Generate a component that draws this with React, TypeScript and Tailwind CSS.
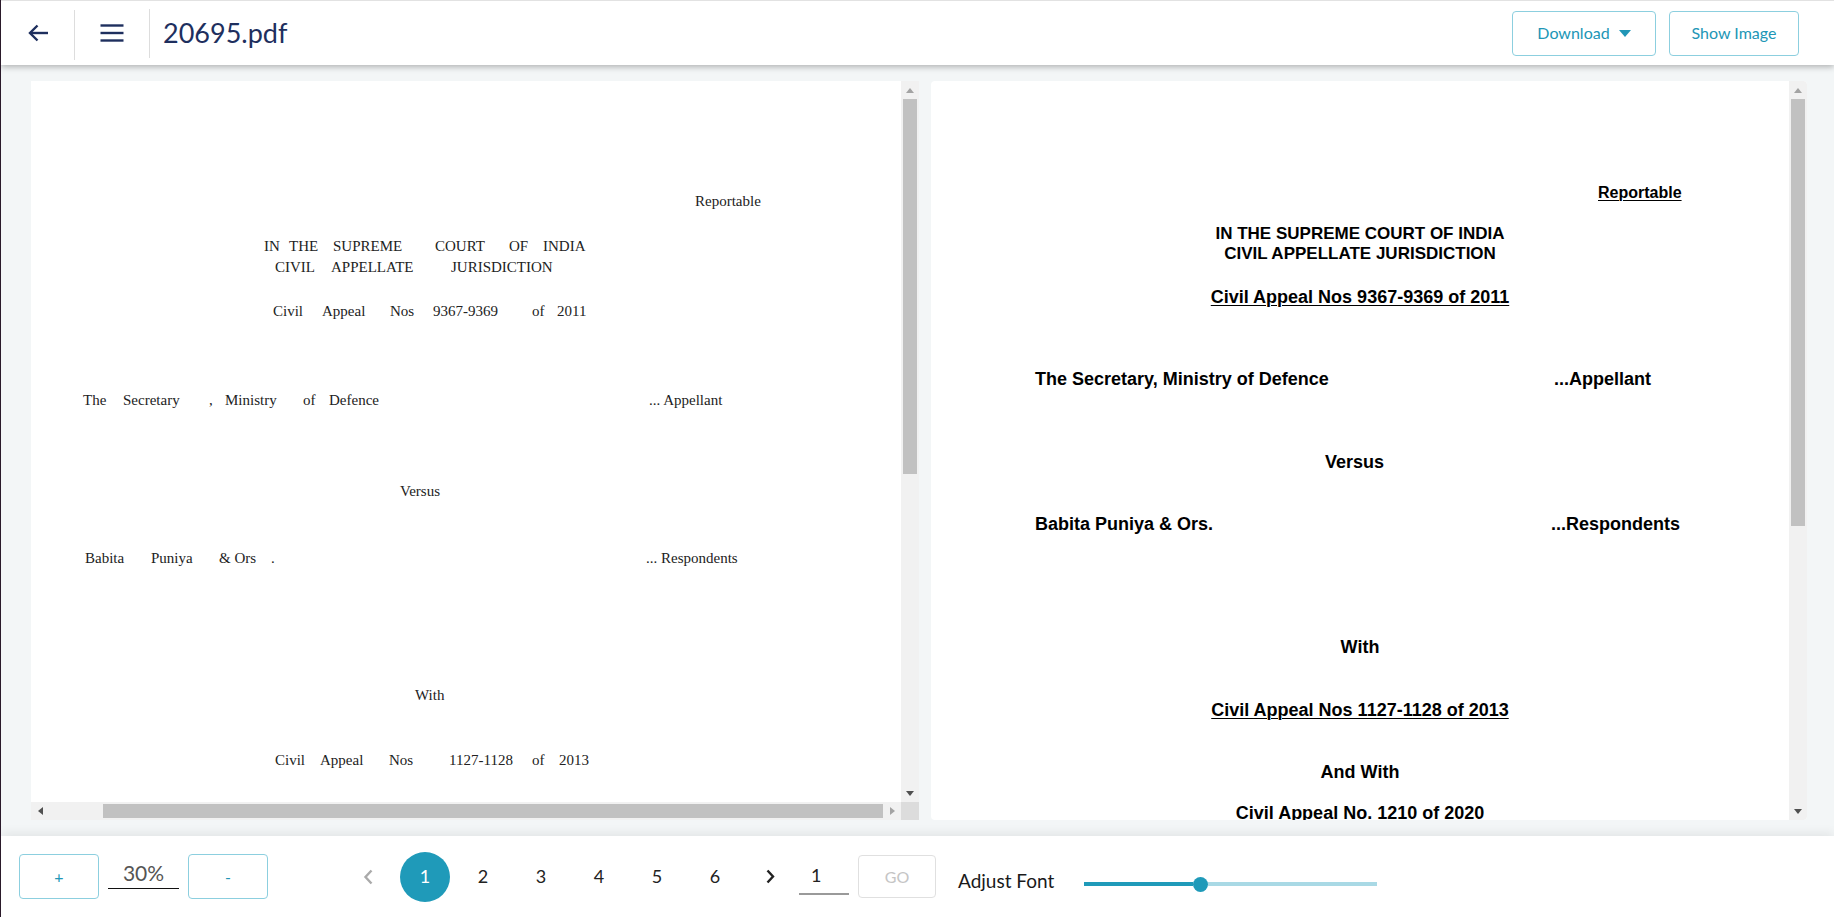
import React from "react";

function UpTri({ c }: { c: string }) {
  return (
    <svg width="8" height="5" viewBox="0 0 8 5">
      <polygon points="0,5 4,0 8,5" fill={c} />
    </svg>
  );
}
function DownTri({ c }: { c: string }) {
  return (
    <svg width="8" height="5" viewBox="0 0 8 5">
      <polygon points="0,0 8,0 4,5" fill={c} />
    </svg>
  );
}
function LeftTri({ c }: { c: string }) {
  return (
    <svg width="5" height="8" viewBox="0 0 5 8">
      <polygon points="5,0 5,8 0,4" fill={c} />
    </svg>
  );
}
function RightTri({ c }: { c: string }) {
  return (
    <svg width="5" height="8" viewBox="0 0 5 8">
      <polygon points="0,0 5,4 0,8" fill={c} />
    </svg>
  );
}

function VScroll({ thumb }: { thumb: "l" | "r" }) {
  return (
    <div className="w-[18px] shrink-0 bg-[#f1f1f1] flex flex-col">
      <div className="h-[18px] flex items-center justify-center">
        <UpTri c="#a3a3a3" />
      </div>
      {thumb === "l" ? (
        <div className="mx-[2px] h-[375px] bg-[#c1c1c1]" />
      ) : (
        <div className="mx-[2px] h-[427px] bg-[#c1c1c1]" />
      )}
      <div className="flex-1" />
      <div className="h-[18px] flex items-center justify-center">
        <DownTri c="#505050" />
      </div>
    </div>
  );
}

export default function App() {
  return (
    <div className="h-screen w-full flex flex-col overflow-hidden border-l border-[#2a1a2a] bg-white font-['Lato','Open_Sans',sans-serif]">
      {/* Header */}
      <header className="relative z-10 h-[65px] shrink-0 bg-white border-t border-[#e2e2e2] shadow-[0_2px_6px_rgba(0,0,0,0.28)] flex items-center">
        <div className="w-[73px] h-full flex items-center justify-center">
          <svg width="22" height="20" viewBox="0 0 22 20" fill="none" stroke="#1e2f5e" strokeWidth="2.4" strokeLinecap="butt">
            <path d="M21 10H3" />
            <path d="M10.5 2.5L3 10l7.5 7.5" />
          </svg>
        </div>
        <div className="w-px h-[50px] bg-[#dddddd] mt-[4px]" />
        <div className="w-[74px] h-full flex items-center justify-center">
          <svg width="24" height="18" viewBox="0 0 24 18" fill="none" stroke="#1e2f5e" strokeWidth="2.4">
            <path d="M0.5 1.5H23.5" />
            <path d="M0.5 9H23.5" />
            <path d="M0.5 16.5H23.5" />
          </svg>
        </div>
        <div className="w-px h-[49px] bg-[#dddddd]" />
        <div className="ml-[13px] text-[27px] leading-none text-[#1e2f5e] pb-[2px]">20695.pdf</div>
        <div className="ml-auto mr-[35px] flex gap-[13px]">
          <button className="w-[144px] h-[45px] border border-[#8ccfdf] rounded-[4px] text-[#2196b6] text-[16px] flex items-center justify-center gap-[9px]">
            <span>Download</span>
            <svg width="12" height="7" viewBox="0 0 12 7">
              <polygon points="0,0 12,0 6,7" fill="#2196b6" />
            </svg>
          </button>
          <button className="w-[130px] h-[45px] border border-[#8ccfdf] rounded-[4px] text-[#2196b6] text-[16px] flex items-center justify-center">
            Show Image
          </button>
        </div>
      </header>

      {/* Main */}
      <main className="flex-1 min-h-0 bg-[#f3f6f7] flex pt-[16px] pb-[16px] pl-[30px] gap-[12px]">
        {/* Left pane */}
        <div className="w-[888px] shrink-0 bg-white flex flex-col">
          <div className="flex-1 min-h-0 flex">
            <div className="flex-1 overflow-hidden font-['Liberation_Serif','Times_New_Roman',serif] text-[15px] leading-[20px] text-[#222] whitespace-nowrap">
              <div className="mt-[110px] pl-[664px]">Reportable</div>
              <div className="mt-[25px] pl-[233px] flex">
                <span className="w-[25px]">IN</span>
                <span className="w-[44px]">THE</span>
                <span className="w-[102px]">SUPREME</span>
                <span className="w-[74px]">COURT</span>
                <span className="w-[34px]">OF</span>
                <span>INDIA</span>
              </div>
              <div className="mt-[1px] pl-[244px] flex">
                <span className="w-[56px]">CIVIL</span>
                <span className="w-[120px]">APPELLATE</span>
                <span>JURISDICTION</span>
              </div>
              <div className="mt-[24px] pl-[242px] flex">
                <span className="w-[49px]">Civil</span>
                <span className="w-[68px]">Appeal</span>
                <span className="w-[43px]">Nos</span>
                <span className="w-[99px]">9367-9369</span>
                <span className="w-[25px]">of</span>
                <span>2011</span>
              </div>
              <div className="mt-[69px] pl-[52px] flex">
                <span className="w-[40px]">The</span>
                <span className="w-[86px]">Secretary</span>
                <span className="w-[16px]">,</span>
                <span className="w-[78px]">Ministry</span>
                <span className="w-[26px]">of</span>
                <span className="w-[320px]">Defence</span>
                <span>... Appellant</span>
              </div>
              <div className="mt-[71px] pl-[369px]">Versus</div>
              <div className="mt-[47px] pl-[54px] flex">
                <span className="w-[66px]">Babita</span>
                <span className="w-[68px]">Puniya</span>
                <span className="w-[52px]">&amp; Ors</span>
                <span className="w-[375px]">.</span>
                <span>... Respondents</span>
              </div>
              <div className="mt-[117px] pl-[384px]">With</div>
              <div className="mt-[45px] pl-[244px] flex">
                <span className="w-[45px]">Civil</span>
                <span className="w-[69px]">Appeal</span>
                <span className="w-[60px]">Nos</span>
                <span className="w-[83px]">1127-1128</span>
                <span className="w-[27px]">of</span>
                <span>2013</span>
              </div>
            </div>
            <VScroll thumb="l" />
          </div>
          <div className="h-[18px] shrink-0 flex">
            <div className="flex-1 bg-[#f1f1f1] flex">
              <div className="w-[18px] flex items-center justify-center">
                <LeftTri c="#505050" />
              </div>
              <div className="w-[54px]" />
              <div className="w-[780px] my-[2px] bg-[#c1c1c1]" />
              <div className="w-[18px] flex items-center justify-center">
                <RightTri c="#a3a3a3" />
              </div>
            </div>
            <div className="w-[18px] bg-[#dcdcdc]" />
          </div>
        </div>

        {/* Right pane */}
        <div className="w-[876px] shrink-0 bg-white rounded-[4px] flex overflow-hidden">
          <div className="flex-1 overflow-hidden font-['Liberation_Sans',Arial,sans-serif] font-bold text-black leading-[20px] whitespace-nowrap">
            <div className="mt-[102px] pl-[667px] text-[16px] underline decoration-1 underline-offset-2">Reportable</div>
            <div className="mt-[21px] text-center text-[17px]">IN THE SUPREME COURT OF INDIA</div>
            <div className="text-center text-[17px]">CIVIL APPELLATE JURISDICTION</div>
            <div className="mt-[23px] text-center text-[18px] underline decoration-1 underline-offset-2">Civil Appeal Nos 9367-9369 of 2011</div>
            <div className="mt-[62px] pl-[104px] flex text-[18px]">
              <span className="w-[519px]">The Secretary, Ministry of Defence</span>
              <span>...Appellant</span>
            </div>
            <div className="mt-[63px] text-center text-[18px] pr-[11px]">Versus</div>
            <div className="mt-[42px] pl-[104px] flex text-[18px]">
              <span className="w-[516px]">Babita Puniya &amp; Ors.</span>
              <span>...Respondents</span>
            </div>
            <div className="mt-[103px] text-center text-[18px]">With</div>
            <div className="mt-[43px] text-center text-[18px] underline decoration-1 underline-offset-2">Civil Appeal Nos 1127-1128 of 2013</div>
            <div className="mt-[42px] text-center text-[18px]">And With</div>
            <div className="mt-[21px] text-center text-[18px]">Civil Appeal No. 1210 of 2020</div>
          </div>
          <VScroll thumb="r" />
        </div>
      </main>

      {/* Footer */}
      <footer className="relative z-10 h-[81px] shrink-0 bg-white shadow-[0_-3px_10px_rgba(0,0,0,0.07)] flex items-center">
        <button className="ml-[18px] w-[80px] h-[45px] border border-[#8ccfdf] rounded-[4px] text-[#2196b6] text-[16px]">+</button>
        <div className="ml-[9px] w-[71px] h-[34px] self-start mt-[19px] border-b border-[#111] flex items-center justify-center pt-[2px] text-[21px] text-[#555]">30%</div>
        <button className="ml-[9px] w-[80px] h-[45px] border border-[#8ccfdf] rounded-[4px] text-[#2196b6] text-[16px]">-</button>

        <div className="ml-[75px] w-[50px] flex items-center justify-center">
          <svg width="10" height="16" viewBox="0 0 10 16" fill="none" stroke="#aaaaaa" strokeWidth="2.4">
            <path d="M8.5 1.5L2.5 8l6 6.5" />
          </svg>
        </div>
        <div className="ml-[7px] flex gap-[8px] text-[18px] text-[#222]">
          <div className="w-[50px] h-[50px] rounded-full bg-[#1f9ab9] text-white flex items-center justify-center">1</div>
          <div className="w-[50px] h-[50px] flex items-center justify-center">2</div>
          <div className="w-[50px] h-[50px] flex items-center justify-center">3</div>
          <div className="w-[50px] h-[50px] flex items-center justify-center">4</div>
          <div className="w-[50px] h-[50px] flex items-center justify-center">5</div>
          <div className="w-[50px] h-[50px] flex items-center justify-center">6</div>
        </div>
        <div className="ml-[5px] w-[50px] flex items-center justify-center">
          <svg width="9" height="15" viewBox="0 0 9 15" fill="none" stroke="#222222" strokeWidth="2.4">
            <path d="M1.5 1.5l5.5 6-5.5 6" />
          </svg>
        </div>
        <div className="ml-[4px] w-[50px] h-[37px] self-start mt-[22px] border-b-2 border-[#9a9a9a] flex items-center pl-[12px] text-[18px] text-[#222]">1</div>
        <button className="ml-[9px] w-[78px] h-[43px] border border-[#e0e0e0] rounded-[4px] text-[#c5c5c5] text-[16px]">GO</button>
        <div className="ml-[22px] mt-[9px] text-[19px] text-[#1a1a1a]">Adjust Font</div>
        <div className="ml-[30px] mt-[15px] w-[293px] h-[15px] flex items-center">
          <div className="w-[109px] h-[4px] bg-[#1f9ab9]" />
          <div className="w-[15px] h-[15px] rounded-full bg-[#1f9ab9]" />
          <div className="flex-1 h-[4px] bg-[#a9d9e5]" />
        </div>
      </footer>
    </div>
  );
}
